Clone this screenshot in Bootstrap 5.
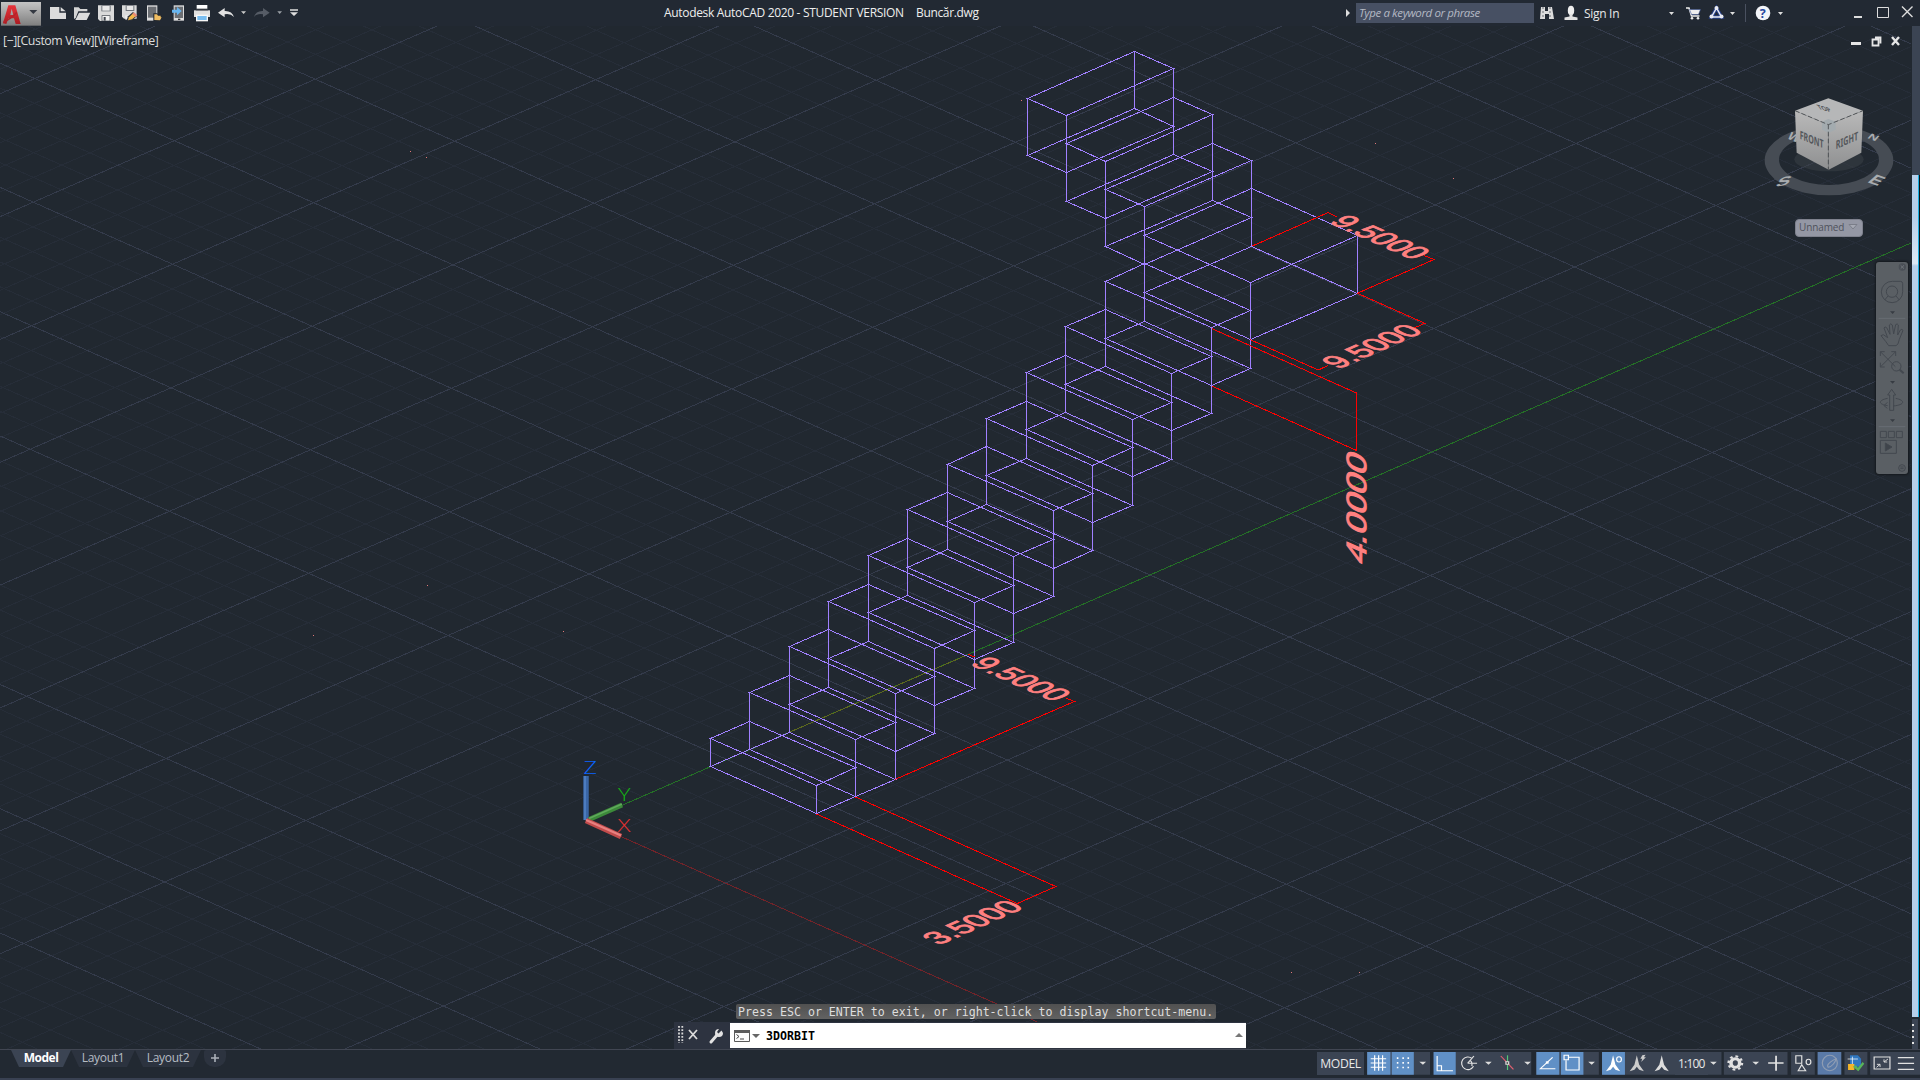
<!DOCTYPE html>
<html lang="en">
<head>
<meta charset="utf-8">
<title>Autodesk AutoCAD 2020</title>
<link rel="stylesheet" href="https://cdn.jsdelivr.net/npm/bootstrap@5.3.0/dist/css/bootstrap.min.css">
<style>
html,body{height:100%;margin:0;overflow:hidden;background:#212830}
body{font-family:"Open Sans","Noto Sans",sans-serif;font-size:12px;line-height:1;color:#e8e8e8}
svg{display:block;flex:none}
.title-strip{height:26px;background:#222933}
.title-text{left:664px;top:0;height:26px;line-height:25px;white-space:pre;color:#eee}
.t-a{letter-spacing:-.32px;width:252px}.t-b{letter-spacing:-.34px}
.search-box{width:178px;height:20px;background:#475063;color:#b4b9c4;font-style:italic;line-height:20px;padding-left:3px;letter-spacing:-.4px;font-size:11.5px}
.sign-text{width:78px;padding-left:3px;letter-spacing:-.3px;line-height:27px}
.draw-area{background:#212830;min-height:0}
.draw-area>svg{width:1920px;height:1023px}
.view-label{left:3px;top:6px;font-size:12.4px;line-height:17px;letter-spacing:-.45px;color:#dcdcdc}
.dim{font-family:"Liberation Sans",sans-serif;font-size:25px;fill:#ff8080;stroke:#ff8080;stroke-width:.9}
.edge{stroke:#a080ff;fill:none;shape-rendering:crispEdges}
.red{stroke:#f00;fill:none;shape-rendering:crispEdges}
.ucs{fill:none}
.ucs text{font-family:"Open Sans",sans-serif;font-weight:300;font-size:17.5px}
.face{font-family:"Noto Sans",sans-serif;font-weight:700;fill:#55585c}
.wind{font-family:"Liberation Sans",sans-serif;font-weight:700;fill:#a9acaf}
.ucs-pick{left:1795px;top:193px;width:68px;height:18px;background:#9497a4;border:1px solid #7e818d;border-radius:4px;color:#4f525c;font-size:10px;letter-spacing:-.12px;padding:0 4px 2px 3px}
.nav-tools{left:1876px;top:236px;width:32px;height:212px;background:#5a5f64;border-radius:3px;box-shadow:0 0 2px 1px #15191e}
.prompt{left:736px;top:978px;width:480px;height:15px;background:linear-gradient(#505050,#626262);border-radius:2px;color:#dedede;padding-left:2px;line-height:17px;white-space:pre}
.mono{font-family:"DejaVu Sans Mono",monospace;font-size:11.62px}
.cmd{left:674px;top:996px;width:572px;height:27px;background:#2d3340}
.cmd-input{width:516px;height:25px;background:#fff;color:#000;margin-top:1px}
.cmd-input span{font-weight:700;width:464px;padding-top:3px}
.status{height:31px;background:#222932;border-top:1px solid #414652;border-bottom:2px solid #394152}
.sheet{height:17px;line-height:16px;background:#2c333f;color:#b6bcc4;clip-path:polygon(0 0,100% 0,calc(100% - 8px) 100%,8px 100%)}
.sheet.on{background:#3b4453;color:#fff;font-weight:700}
.s1{width:60px;margin-left:11px;letter-spacing:-.5px}.s2{width:64px;letter-spacing:-.33px}.s2+.s2{width:66px}.s4{width:22px;margin-left:3px;border-radius:2px 2px 10px 10px;clip-path:none}
.mode{width:47px;height:23px;background:#3b4453;line-height:23px;margin-top:2px;letter-spacing:-.35px;font-size:12.2px}
.ratio{width:33px;height:23px;background:#3b4453;line-height:23px;margin-top:2px;letter-spacing:-.8px;padding-left:3px}
.mt0{height:28px}
</style>
</head>
<body class="d-flex flex-column vh-100">
<svg width="0" height="0" class="position-absolute"><defs>
<linearGradient id="gb" x2="0" y2="1"><stop stop-color="#c4c4c4"/><stop offset="1" stop-color="#7f7f7f"/></linearGradient>
<linearGradient id="ga" x2="0" y2="1"><stop stop-color="#e8333a"/><stop offset="1" stop-color="#ab1c23"/></linearGradient>
<linearGradient id="gf" x2="0" y2="1"><stop stop-color="#b9b9b9"/><stop offset="1" stop-color="#8f9091"/></linearGradient>
<linearGradient id="gs" x2="0" y2="1"><stop stop-color="#b6cfea"/><stop offset=".05" stop-color="#b6cfea"/><stop offset=".105" stop-color="#dde8f4"/><stop offset=".108" stop-color="#b6cfea"/></linearGradient>
</defs></svg>

<header class="title-strip d-flex position-relative flex-shrink-0">
  <!-- application button and quick access tools -->
  <svg width="46" height="26" viewBox="0 0 138 78"><rect x="3" y="6" width="120" height="71" fill="url(#gb)"/><path d="M9 70 25 16h21l16 56H47l-5-17H25l-6 17zM31 45h9l-5-19z" fill="url(#ga)"/><path d="M9 70q26-12 43-31l-3-4Q32 55 11 62z" fill="#b5242b"/><path d="M88 30h24L100 42z" fill="#343942"/></svg>
  <svg width="24" height="26" viewBox="138 0 72 78"><path d="M150 21h28v17h20v19h-48z" fill="#dcdcdc"/><path d="M182 21v13h15z" fill="#dcdcdc"/></svg>
  <svg width="24" height="26" viewBox="210 0 72 78"><path d="M222 57V22h14l5 5h21v7h-27l-8 20z" fill="#d4d4d4"/><path d="M237 38h34l-11 22h-34z" fill="#dcdcdc"/></svg>
  <svg width="24" height="26" viewBox="282 0 72 78"><path d="M294 16h48v47h-42l-6-6z" fill="#dadada"/><path d="M304 16h28v18h-28z" fill="#70757c"/><path d="M307 18h22v14h-22z" fill="#e8e8e8"/><path d="M305 46h26v17h-26z" fill="#41464d"/><path d="M307 48h22v14h-22z" fill="#f2f2f2"/><path d="M311 51h6v11h-6z" fill="#41464d"/></svg>
  <svg width="24" height="26" viewBox="354 0 72 78"><path d="M366 16h44v40h-38l-6-6z" fill="#dadada"/><path d="M377 16h26v17h-26z" fill="#70757c"/><path d="M380 18h20v12h-20z" fill="#e8e8e8"/><path d="M376 46h22v13h-22z" fill="#eee"/><path d="m379 64 5-15 15-13 13 11-17 15z" fill="#2b3038"/><path d="m384 61 3-9 14-14 8 9-13 11z" fill="#f2b74a"/><path d="m397 42 5-5 10 9-5 5z" fill="#e98b77"/></svg>
  <svg width="24" height="26" viewBox="426 0 72 78"><path d="M441 16h31v46h-31z" fill="#ddd"/><path d="M444 20h25v33h-25z" fill="#6b6e73"/><path d="M460 63V40h12l3 4h10v6l-5 13z" fill="#22272e"/><path d="M463 60V43h8l3 4h8v5h3l-5 9z" fill="#f0bd62"/></svg>
  <svg width="24" height="26" viewBox="498 0 72 78"><path d="M521 16h31v46h-31z" fill="#ddd"/><path d="M524 20h25v34h-25z" fill="#6b6e73"/><path d="M534 56h7v4h-7z" fill="#333"/><path d="M516 29h15v-8l14 12-14 13v-8h-15z" fill="#67b5f0"/></svg>
  <svg width="24" height="26" viewBox="570 0 72 78"><path d="M590 15h32v15h-32z" fill="#fff"/><path d="M582 31h48v20h-48z" fill="#e0e0e0"/><path d="M588 44h36v20h-36z" fill="#f8f8f8"/><path d="M592 48h28v12h-28z" fill="#79bdf0"/><path d="M588 26h36v5h-36z" fill="#33383f"/></svg>
  <svg width="74" height="26" viewBox="642 0 222 78"><path d="m654 38 20-14v9q22-1 28 18-10-11-28-8v9z" fill="#e2e2e2"/><path d="M723 34h15l-7 8z" fill="#ccc"/><path d="m809 38-20-14v9q-22-1-27 18 9-11 27-8v9z" fill="#565c66"/><path d="M832 34h14l-7 8z" fill="#9ba0a6"/></svg>
  <svg width="16" height="26" viewBox="864 0 48 78"><path d="M870 28h24v4h-24zM870 37h24l-12 11z" fill="#ddd"/></svg>
  <div class="title-text position-absolute d-flex"><span class="t-a">Autodesk AutoCAD 2020 - STUDENT VERSION</span><span class="t-b">Buncăr.dwg</span></div>
  <div class="d-flex align-items-center ms-auto">
    <svg width="13" height="26" viewBox="0 0 13 26"><path d="M3 9v8l4-4z" fill="#ddd"/></svg>
    <div class="search-box">Type a keyword or phrase</div>
    <svg width="47" height="26" viewBox="1534 0 47 26"><path d="M1541 7h4v4h3V7h4l2 12h-5v-5h-4v5h-5z" fill="#dcdcdc"/><path d="M1543 7v12M1550 7v12" stroke="#6b6f75" stroke-dasharray="2 2"/><ellipse cx="1571" cy="10.500" rx="3.200" ry="4.800" fill="#eee"/><path d="M1569.500 14h3v2.500l5 1V20h-13v-2.500l5-1z" fill="#e2e2e2"/></svg>
    <div class="sign-text">Sign In</div>
    <svg width="261" height="26" viewBox="1659 0 261 26" fill="none"><path d="M1669 12h5l-2.500 3zM1730 12h5l-2.500 3zM1778 12h5l-2.500 3z" fill="#ddd"/><path d="M1686 8h3l2.500 8h8" stroke="#eee" stroke-width="1.500"/><path d="M1689.500 9.500h11l-2 5h-7z" fill="#eee" stroke="#27408b" stroke-width=".5"/><circle cx="1692" cy="18.200" r="1.300" fill="#eee"/><circle cx="1698" cy="18.200" r="1.300" fill="#eee"/><path d="m1716.500 8-5 9h10z" stroke="#27408b" stroke-width="3.500"/><path d="m1716.500 8-5 9h10z" stroke="#e8eaf2" stroke-width="1.500"/><g fill="#e8eaf2"><circle cx="1716.500" cy="8" r="2"/><circle cx="1711.500" cy="16.500" r="2"/><circle cx="1721.500" cy="16.500" r="2"/></g><path d="M1745.500 4v18" stroke="#4a5160"/><circle cx="1763" cy="13" r="7.300" fill="#f3f5fa"/><text x="1759.700" y="17.700" font-size="12.500" font-weight="700" fill="#27479f">?</text><path d="M1854 17h8" stroke="#ddd" stroke-width="2"/><path d="M1877.500 7.500h11v10h-11z" stroke="#ddd"/><path d="m1902 6.500 10.500 10.500m0-10.500L1902 17" stroke="#ddd" stroke-width="1.400"/></svg>
  </div>
</header>

<main class="draw-area position-relative flex-grow-1">
  <svg viewBox="0 26 1920 1023">
    <clipPath id="cp"><path d="M0 26h1911v1023H0z"/></clipPath>
    <g clip-path="url(#cp)" shape-rendering="crispEdges" fill="none">
      <path id="minor" stroke="#262d38"/><path id="major" stroke="#343b4b"/>
      <path d="M586 821 1911 243" stroke="#247026"/><path d="M790 732 967 655" stroke="#5c691d"/><path d="M750 749.500 790 732" stroke="#408653"/>
      <path d="m586 821 512 228" stroke="#722329"/>
    </g>
    <path id="stairs" class="edge"/>
    <path class="red" d="M816.500 814 1017.300 903.500 1055.900 886.500 855.500 797M895.400 779.300 1074.300 701.500 1066 698M968.400 654.300l7 3M1251.700 246.300 1328.300 212.500 1336.700 217M1357.300 293.300 1434 259.500 1424 255.500M1357.300 293.300 1425 323.300 1414 328M1250.300 339.700 1318.300 370 1328 365.500M1211.700 328.500 1356.500 393V450.500L1211.700 386"/>
    <text class="dim" transform="matrix(1.126 -.49 1.116 .492 939 945.200)">3.5000</text>
    <text class="dim" transform="matrix(1.116 .492 -1.126 .49 968.700 664.300)">9.5000</text>
    <text class="dim" transform="matrix(1.116 .492 -1.126 .49 1328 222.500)">9.5000</text>
    <text class="dim" transform="matrix(1.126 -.49 1.116 .492 1338.300 369.200)">9.5000</text>
    <text class="dim" transform="matrix(0 -1.43 1.116 .492 1365.700 566)">4.0000</text>
    <path fill="#e07878" d="M410 151h1v1h-1zM426 157h1v1h-1zM1453 178h1v1h-1zM1375 143h1v1h-1zM427 585h1v1h-1zM313 635h1v1h-1zM563 631h1v1h-1zM1291 972h1v1h-1zM1359 972h1v1h-1zM1021 100h1v1h-1z"/>
    <g stroke-linecap="butt" fill="none">
      <path d="M586 776v44" stroke="#3a66a6" stroke-width="5.500"/><path d="M585 776v44" stroke="#5384c7" stroke-width="1.500"/>
      <path d="m589 819.500 33-14.500" stroke="#3c8a3a" stroke-width="5"/><path d="m589 818.500 33-14.500" stroke="#60a95c" stroke-width="1.500"/>
      <path d="m586 820.500 35 16" stroke="#c14b4b" stroke-width="5.500"/><path d="m586 820 35 15.500" stroke="#e88080" stroke-width="2"/>
    </g>
    <g class="ucs"><text x="583.500" y="773.500" fill="#0a64ff" textLength="13.500" lengthAdjust="spacingAndGlyphs">Z</text><text x="618" y="801" fill="#14b414" textLength="12.500" lengthAdjust="spacingAndGlyphs">Y</text><text x="617.500" y="832" fill="#e03030" textLength="13" lengthAdjust="spacingAndGlyphs">X</text></g>
    <!-- view cube -->
    <g transform="translate(1740 70) scale(.33333)">
      <path fill-rule="evenodd" fill="#464c54" d="M74 271a193 105 0 1 0 386 0a193 105 0 1 0-386 0zm43-2a150 76 0 1 0 300 0a150 76 0 1 0-300 0z"/>
      <g class="wind" font-size="46"><text transform="matrix(.8 .32 -.5 .62 139 205)">W</text><text transform="matrix(1 .35 -.5 .55 380 204)" font-size="38">N</text><text transform="matrix(1.350 -.3 -.45 .85 104 352)">S</text><text transform="matrix(1.100 .4 -.85 .75 380 336)">E</text></g>
      <ellipse cx="267" cy="268" rx="104" ry="36" fill="#3b4148" opacity=".5"/>
      <path d="m165 122 100 42 1 135-96-51z" fill="url(#gf)"/><path d="m265 164 104-42-5 126-98 51z" fill="url(#gf)"/><path d="m165 122 100-37 104 37-104 42z" fill="#b6b7b8"/>
      <path d="m246 155 19-8 22 8v24l-21 9-20-9z" fill="#a3abaf"/>
      <path d="m165 122 100 42 104-42M265 164v135" stroke="#45484c" stroke-width="2.500" stroke-dasharray="14 7" fill="none"/>
      <g class="face"><text transform="matrix(.78 .32 0 1.150 179 206)" font-size="30" textLength="92" lengthAdjust="spacingAndGlyphs">FRONT</text><text transform="matrix(.78 -.34 0 1.150 287 238)" font-size="30" textLength="86" lengthAdjust="spacingAndGlyphs">RIGHT</text><text transform="matrix(.8 .2 .5 .75 238 118)" font-size="27" textLength="48" lengthAdjust="spacingAndGlyphs">TOP</text></g>
    </g>
    <!-- minimise / restore / close for the drawing window -->
    <path d="M1851 43.500h10" stroke="#e6e6e6" stroke-width="3"/><path d="M1872.500 39.500h6v6h-6zM1875 37.500h5.500v6" fill="none" stroke="#e6e6e6" stroke-width="1.800"/><path d="m1892 37 7 8m0-8-7 8" stroke="#e6e6e6" stroke-width="2.400"/>
    <path d="M1912 26h8v149h-8z" fill="#3b4453"/><path d="M1912 175h6v842h-6z" fill="url(#gs)"/><path d="M1918 175h1v842h-1z" fill="#19aee0"/><path d="M1919 175h1v842h-1z" fill="#101418"/><path d="M1912 1019h6v30h-6z" fill="#3b4453"/><path d="M1912 1024h2v2h-2zM1912 1030h2v2h-2zM1912 1036h2v2h-2zM1912 1042h2v2h-2z" fill="#e4e4e4"/>
  </svg>
  <div class="view-label position-absolute">[−][Custom View][Wireframe]</div>
  <div class="ucs-pick position-absolute d-flex align-items-center justify-content-between"><span>Unnamed</span><svg width="10" height="6" viewBox="0 0 10 6"><path d="M1 .5h8L5 5z" fill="#a6a9b4" stroke="#7b7e89"/></svg></div>
  <div class="nav-tools position-absolute">
    <svg width="32" height="212" viewBox="408 576 96 636" fill="none" stroke="#43484f" stroke-width="3">
      <circle cx="487" cy="591" r="11" fill="#4a4f56" stroke="none"/><path d="m482 586 10 10m0-10-10 10" stroke="#70757b"/>
      <path d="M457 634h24q7 0 7 7v24a32 32 0 1 1-31-31z"/><circle cx="456" cy="665" r="17"/><path d="m434 690 10-12m34 12-10-12"/>
      <path d="M450 724h15l-7 8zM450 933h15l-7 8zM450 1048h15l-7 8z" fill="#373c43" stroke="none"/>
      <path d="M416 745h80M416 1070h80" stroke="#686d73"/>
      <path d="m423 797 7-3 13 9-11-29q2-6 8-1l10 20-2-28q4-7 9 0l4 27 6-28q5-5 8 1l-2 30 8-15q5-4 8 1l-11 27q-3 18-10 19h-22q-6-10-23-30z"/>
      <path d="m422 846 44 44m0-44-44 44M421 858v-13h13M454 845h13v13M421 878v13h13"/><circle cx="469" cy="889" r="14"/><path d="m479 899 12 11" stroke-width="6"/>
      <path d="M449 1021v-46h-6l12-17 12 17h-6v46z"/><path d="M443 985c-30 6-28 18 0 22M467 985c30 6 28 20-8 23M442 997l-10 10 10 8"/>
      <path d="M421 1084h18v19h-18zM445 1084h18v19h-18zM469 1084h18v19h-18zM421 1111h48v39h-48z"/><path d="m436 1119 20 12-20 12z" fill="#3f444b"/>
      <circle cx="486" cy="1194" r="10"/><path d="M481 1191h10M481 1196h10"/>
    </svg>
  </div>
  <div class="prompt mono position-absolute">Press ESC or ENTER to exit, or right-click to display shortcut-menu.</div>
  <div class="cmd position-absolute d-flex">
    <svg width="56" height="27" viewBox="674 1022 56 27" fill="none"><path d="M679 1026v17M682.300 1026v17" stroke="#d8d8d8" stroke-width="1.800" stroke-dasharray="1.800 1.500"/><path d="m689 1030 8 9m0-9-8 9" stroke="#dadada" stroke-width="1.800"/><path d="m711 1042 6-7" stroke="#e2e2e2" stroke-width="3" stroke-linecap="round"/><path d="M721.500 1030.500l-3 3-1.500-1.500 2-3a4 4 0 1 0 4 4z" fill="#e2e2e2"/></svg>
    <div class="cmd-input mono d-flex align-items-center">
      <svg width="36" height="25" viewBox="730 1023 36 25" fill="none"><path d="M734.500 1030.500h15v11h-15z" fill="#fafafa" stroke="#5a5a5a"/><path d="M734 1030h16v3h-16z" fill="#5a5a5a"/><path d="m736.500 1034.500 2.500 2-2.500 2M740 1039h4" stroke="#444"/><path d="M752 1034h8l-4 4z" fill="#666"/></svg>
      <span>3DORBIT</span>
      <svg width="14" height="25" viewBox="1230 1023 14 25"><path d="M1235 1037h8l-4-4z" fill="#777"/></svg>
    </div>
  </div>
</main>

<footer class="status d-flex justify-content-between flex-shrink-0">
  <nav class="d-flex text-center">
    <div class="sheet on s1">Model</div><div class="sheet s2">Layout1</div><div class="sheet s2">Layout2</div><div class="sheet s4"><svg width="22" height="16" viewBox="0 0 22 16"><path d="M11 4v8M7 8h8" stroke="#aab0b8" stroke-width="1.600"/></svg></div>
  </nav>
  <div class="d-flex mt0">
    <div class="mode text-center">MODEL</div>
    <svg width="311" height="28" viewBox="162 30 786.600 84" preserveAspectRatio="none" fill="none" stroke="#e2e2e2" stroke-width="3">
      <g stroke="none"><path d="M170 36h159v68H170zM338 36h247v68H338zM597 36h159v68H597zM764 36h185v68H764z" fill="#3b4453"/><path d="M170 36h59v68h-59zM232 36h56v68h-56zM338 36h56v68h-56zM598 36h58v68h-58zM660 36h57v68h-57zM764 36h58v68h-58z" fill="#6090c6"/></g>
      <path d="M189 46v46M199 46v46M209 46v46M179 56h39M179 69h39M179 82h39" stroke="#fff"/>
      <path d="M247 52v34M261 52v34M274 52v34" stroke="#fff" stroke-width="4" stroke-dasharray="5 9"/>
      <g fill="#ddd" stroke="none"><path d="M302 65h17l-8 9zM468 65h17l-8 9zM567 65h17l-8 9zM729 65h17l-8 9z"/></g>
      <path d="M347 48v44h40M347 77h11v15" stroke="#fff"/>
      <path d="M439 79a16 19 0 1 1-4-24M424 70h24M424 70l16-22M430 61q6 3 5 17"/>
      <path d="m508 48 32 40" stroke="#e06070"/><path d="M525 46v44" stroke="#55c878"/><path d="M521 65h7v8h-7z" fill="#333"/>
      <path d="m639 52-31 34h38" stroke="#fff"/><path d="M622 64h7v7h-7z" fill="#fff" stroke="none"/>
      <path d="M680 52h26v38h-33V61" stroke="#fff"/><path d="M668 46h11v13h-11z" stroke="#fff" fill="#6090c6"/>
      <g fill="#eee" stroke="none"><path d="m792 46 6 28 12 20-12-5-6-9-6 9-12 5 12-20z" fill="#fff"/><path d="m852 46 6 28 12 20-12-5-6-9-6 9-12 5 12-20zM866 46l8-2-4 8h5l-12 14 3-10h-5z" fill="#ccc"/><path d="m915 46 6 28 12 20-12-5-6-9-6 9-12 5 12-20z" fill="#ddd"/></g>
      <ellipse cx="807" cy="58" rx="6" ry="8" stroke="#fff"/>
    </svg>
    <div class="ratio">1:100</div>
    <svg width="212" height="28" viewBox="1031.900 30 536.100 84" preserveAspectRatio="none" fill="none" stroke="#e2e2e2" stroke-width="3">
      <g stroke="none"><path d="M1030 36h36v68h-36zM1072 36h161v68h-161zM1242 36h60v68h-60zM1377 36h58v68h-58zM1442 36h126v68h-126z" fill="#3b4453"/><path d="M1309 36h60v68h-60z" fill="#5a7aa8"/><path d="M1037 65h17l-8 9zM1144 65h17l-8 9z" fill="#ddd"/></g>
      <ellipse cx="1101" cy="69" rx="11" ry="13" stroke="#e0e0e0" stroke-width="9"/><ellipse cx="1101" cy="69" rx="17" ry="20" stroke="#e0e0e0" stroke-width="6" stroke-dasharray="7 7.500"/>
      <path d="M1204 47v45M1184 69h39" stroke-width="4.500"/>
      <path d="M1254 47h15v23h-15zM1269 74l10 18h-19z"/><ellipse cx="1286" cy="66" rx="6" ry="8"/>
      <ellipse cx="1340" cy="69" rx="19" ry="23" stroke="#8f9db3"/><path d="M1334 78c0-8 14-18 22-22-2 10-10 24-20 26z" stroke="#8f9db3"/>
      <g stroke="none"><path d="M1391 46h20l8 10v24h-28z" fill="#2f77c0"/><path d="M1386 72h16v18h-16z" fill="#f3b52a"/><path d="m1398 80 8-4 5 7 12-17 4 5-15 23z" fill="#58b45a"/></g><path d="M1397 50v22M1385 57h26" stroke="#fff" stroke-width="2"/>
      <path d="M1452 51h40v36h-40z"/><path d="m1487 57-10 9m0-8v8h8M1458 82l9-9m-8 0h8v8" stroke-width="2.500"/>
      <path d="M1512 53h41M1512 70h41M1512 88h41" stroke-width="4"/>
    </svg>
  </div>
</footer>

<script src="https://cdn.jsdelivr.net/npm/bootstrap@5.3.0/dist/js/bootstrap.bundle.min.js"></script>
<script>
const seg = (x, y, u, v) => `M${x.toFixed(1)} ${y.toFixed(1)}l${u.toFixed(1)} ${v.toFixed(1)}`;
// ground grid: five minor cells to each major one
const W = [139.4, 62.05], D = [141, -61.5], O = [586, 821];
let minor = '', major = '';
for (let i = -80; i <= 80; i++) {
  if (!i) continue;
  const k = i / 5, s =
    seg(O[0] + k*W[0] - 16*D[0], O[1] + k*W[1] - 16*D[1], 32*D[0], 32*D[1]) +
    seg(O[0] + k*D[0] - 16*W[0], O[1] + k*D[1] - 16*W[1], 32*W[0], 32*W[1]);
  if (i % 5) minor += s; else major += s;
}
document.getElementById('minor').setAttribute('d', minor);
document.getElementById('major').setAttribute('d', major);

// wireframe boxes: front-left top corner, width vector, depth vector, height
// corners snap to pixel centres so that shared edges stay one pixel wide
const snap = v => Math.floor(v) + .5;
const box = (x, y, a, b, h) => {
  const pt = (i, j, t) => `${snap(x + i*a[0] + j*b[0])} ${snap(y + i*a[1] + j*b[1] + t)}`;
  const loop = t => `M${pt(0,0,t)}L${pt(1,0,t)}L${pt(1,1,t)}L${pt(0,1,t)}z`;
  const post = (i, j) => `M${pt(i,j,0)}L${pt(i,j,h)}`;
  return loop(0) + loop(h) + post(0,0) + post(1,0) + post(0,1) + post(1,1);
};
const across = [106, 46.8], tread = [39.4, -17.2], deep = [106.9, -46.4], left = [-39.1, -17.2];
let d = '';
for (let n = 0; n < 11; n++) d += box(710.3 + 39.52*n, 738.4 - 45.73*n, across, tread, n ? 57.3 : 28.5);
d += box(1144.8, 235.3, across, deep, 57.3);
for (let n = 0; n < 3; n++) d += box(1144.8 - 39.1*n, 206.9 - 45.8*n, left, deep, 57.2);
document.getElementById('stairs').setAttribute('d', d);
</script>
</body>
</html>
